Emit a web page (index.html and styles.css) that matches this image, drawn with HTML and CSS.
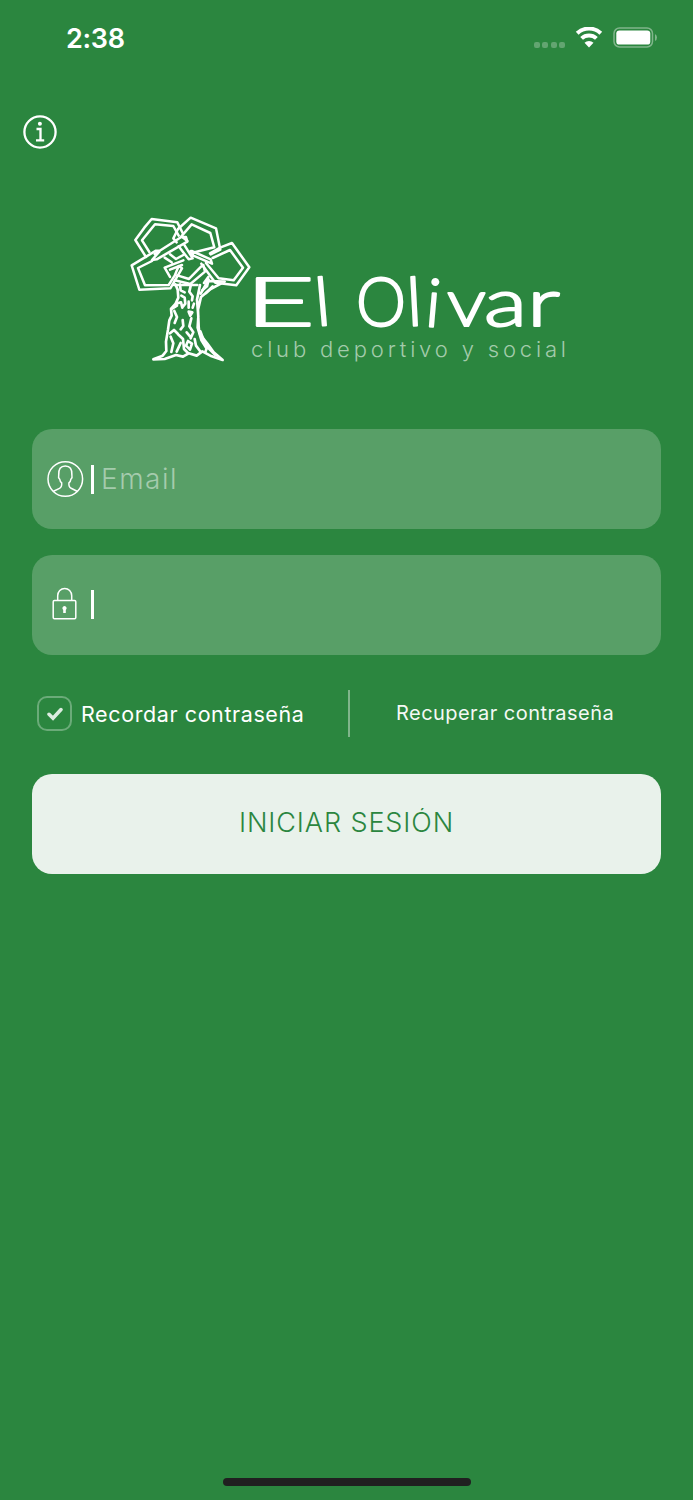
FILE: index.html
```html
<!DOCTYPE html>
<html lang="es">
    <head>
        <meta charset="utf-8" />
        <title>El Olivar</title>
        <link rel="stylesheet" href="styles.css">
    </head>
    <body>
        <header class="status">
            <span class="time">2:38</span>
            <div class="indicators">
                <div class="dots"><i></i><i></i><i></i><i></i></div>
                <svg class="wifi" width="28" height="22" viewBox="0 0 28 22">
                    <path class="wave" d="M2.2 6.3a17 17 0 0 1 23.6 0M6.6 11.4a10.8 10.8 0 0 1 14.8 0"/>
                    <path class="solid" d="M14 20.5l-4.5-4.7a6.5 6.5 0 0 1 9 0z"/>
                </svg>
                <svg class="battery" width="45" height="21" viewBox="0 0 45 21">
                    <rect class="case" x="1" y="1" width="38.5" height="19" rx="5.5"/>
                    <rect class="solid" x="3.3" y="3.4" width="34" height="14.2" rx="3.2"/>
                    <path class="tip" d="M42 7q2 1 2 3.5t-2 3.5z"/>
                </svg>
            </div>
        </header>

        <a class="info" href="#" aria-label="Info">
            <svg width="34" height="34" viewBox="0 0 34 34">
                <circle cx="17" cy="17" r="15.6"/>
                <path d="M13.5 14h4v11.2M13 25.4h8.2"/>
                <circle class="solid" cx="16.9" cy="8.7" r="2"/>
            </svg>
        </a>

        <svg class="logo" width="460" height="165" viewBox="0 0 460 165">
            <g class="tree" transform="scale(.3333)">
                <!-- leaves -->
                <path d="M188 84L172 52 95 42 73 68 46 105 78 156M176 92L160 63 105 58 66 106 88 141"/>
                <path d="M170 112L160 100 174 72 212 38 288 70 301 134 272 148M202 108L184 94 215 58 271 84 283 127 218 143"/>
                <path d="M116 137L108 137 35 181 58 254 151 250 186 190 176 183 164 212 146 240 75 241 54 189 96 168"/>
                <path d="M118 140L96 165 110 163 202 110 198 96 184 96 104 147"/>
                <path d="M134 158L155 172M150 148L168 162 190 150M190 166L134 188 150 216M186 180L150 194"/>
                <path d="M164 226L211 237 255 200 250 180M172 211L207 222 244 184"/>
                <path d="M176 124L206 163 218 160 192 118M212 138L220 152 276 176 272 163 215 138"/>
                <path d="M270 145L302 127 336 114 388 187 349 241 286 233 244 176M278 159L330 135 369 188 341 226 296 220 258 174"/>
                <!-- trunk -->
                <path class="bark" d="M166 238l7 16 2 24-8 18-14 16 2 20-7 14-4 28-6 36 1 28-11 14-28 11 34-1 34-12 21 5 17-10 24 7 17-13 24 13 37 13-27-23-19-26-24-30-2-22-2-50 9-38 29-24 42-22-50-2-22 38M240 240l-9 44 4 50-2 34 11 37 14 23"/>
                <path class="bark" d="M162 240h70M180 238l2 18 12 6M212 243l-4 17 10 14-2 12M184 272l10 6 2 18-8 10M206 290v18M206 320l5 12 6-10zM169 296l14-4 4 16M163 318l8 18-7 18M188 345l2 18-8 10M214 340l-6 24 12 18-8 18M150 385l12-10 12 12M152 395l8 20-6 26M174 388l15 14 3 30 12 12M200 382l10 12M182 414l-12 26M204 408l12 8-6 18-12-12zM224 402l4 20 12 16M241 379l12 32 9 14-6 16M260 424l26 26M247 256l14-12 5-20M258 264l20-20M252 234l13-18M155 312l16-10M222 296l-4 12"/>
            </g>
            <text class="brand" y="121"><tspan x="125" textLength="70" lengthAdjust="spacingAndGlyphs">E</tspan><tspan x="197" rotate="-5">l</tspan> <tspan x="236" textLength="50" lengthAdjust="spacingAndGlyphs">O</tspan><tspan x="288" rotate="-3">l</tspan><tspan x="304" rotate="5">i</tspan><tspan x="327" textLength="39" lengthAdjust="spacingAndGlyphs">v</tspan><tspan x="364" textLength="43" lengthAdjust="spacingAndGlyphs">a</tspan><tspan x="407" textLength="33" lengthAdjust="spacingAndGlyphs">r</tspan></text>
            <text class="tagline" x="131" y="152" textLength="315">club deportivo y social</text>
        </svg>

        <form class="login">
            <label class="field">
                <svg width="38" height="38" viewBox="0 0 38 38">
                    <circle cx="19.3" cy="19" r="17.3"/>
                    <path d="M7 31.5l6.5-3.2q2.5-1.2 2.2-5.4-1.7-1.2-2-3.7-1.7-1.5-1-4-.5-9.2 6.6-9.2t6.6 9.2q.7 2.5-1 4-.3 2.5-2 3.7-.3 4.2 2.2 5.4l6.5 3.2"/>
                </svg>
                <i class="caret"></i>
                <span class="placeholder">Email</span>
            </label>
            <label class="field">
                <svg width="38" height="38" viewBox="0 0 38 38">
                    <rect x="7.2" y="14.5" width="22.6" height="18.3" rx="1.2"/>
                    <path d="M11.7 14.3v-4.5a6.9 7.3 0 0 1 14 0v4.5"/>
                    <path class="solid" d="M18.5 20.1a2.2 2.2 0 0 1 1.3 3.9v3h-2.6v-3a2.2 2.2 0 0 1 1.3-3.9z"/>
                </svg>
                <i class="caret"></i>
            </label>
            <div class="options">
                <label class="remember">
                    <span class="check">
                        <svg width="16" height="14" viewBox="0 0 16 14"><path d="M2 7.3l4 4L14 2.5"/></svg>
                    </span>
                    <span class="remember-text">Recordar contraseña</span>
                </label>
                <a class="recover" href="#">Recuperar contraseña</a>
            </div>
            <button class="submit" type="button"><span>INICIAR SESIÓN</span></button>
        </form>

        <div class="home"></div>
    </body>
</html>
```

FILE: styles.css
```css
* {
    box-sizing: border-box;
}
body {
    display:        flex;
    flex-direction: column;
    height:         1500px;
    margin:         0;
    background:     #2b863f;
    color:          #fff;
    font-family:    Inter, "Liberation Sans", sans-serif;
}
svg {
    display: block;
    flex:    none;
    fill:    none;
    stroke:  #fff;
}
.solid {
    fill:   #fff;
    stroke: none;
}

/* status bar */
.status {
    display:         flex;
    justify-content: space-between;
    height:          76px;
    padding:         24px 35px 0 66px;
}
.time {
    font-size:      27px;
    font-weight:    600;
    line-height:    30px;
    letter-spacing: -.3px;
}
.indicators {
    display:     flex;
    align-items: flex-start;
}
.dots {
    display: flex;
    gap:     2.4px;
    margin:  18px 10px 0 0;
}
.dots i {
    width:         6px;
    height:        6px;
    border-radius: 2px;
    background:    #63a571;
}
.wifi {
    margin: 3px 10px 0 0;
}
.wave {
    stroke-width: 4;
}
.battery {
    margin-top: 3px;
}
.case {
    stroke:       #80b58b;
    stroke-width: 1.5;
}
.tip {
    fill:   #80b58b;
    stroke: none;
}

.info {
    align-self:   flex-start;
    margin:       39px 0 0 23px;
    stroke-width: 2.3;
}

/* logo */
.logo {
    margin: 56px 0 0 120px;
}
.tree {
    stroke-width:    7.5;
    stroke-linejoin: round;
    stroke-linecap:  round;
}
.bark {
    stroke-width: 8;
}
.brand {
    fill:            #fff;
    stroke:          #fff;
    stroke-width:    2;
    stroke-linejoin: round;
    font-family:     Lato, sans-serif;
    font-size:       67px;
    font-weight:     300;
}
.tagline {
    fill:        #a3cbab;
    stroke:      none;
    font-family: Inter, sans-serif;
    font-size:   22px;
    font-weight: 300;
}

/* form */
.login {
    padding: 59px 32px 0;
}
.field {
    display:       flex;
    align-items:   center;
    height:        100px;
    margin-bottom: 25.5px;
    padding-left:  14px;
    border-radius: 20px;
    background:    #589f67;
}
.field svg {
    stroke-width: 1.5;
}
.caret {
    width:       3px;
    height:      29px;
    margin-left: 7px;
    background:  #fff;
}
.placeholder {
    margin:         -1px 0 0 7px;
    color:          #a5cbad;
    font-size:      28px;
    font-weight:    300;
    letter-spacing: 1.5px;
}
.options {
    display:     flex;
    align-items: center;
    height:      47px;
    margin:      35px 0 37px;
}
.remember {
    display:      flex;
    align-items:  center;
    width:        318px;
    height:       47px;
    padding-left: 5px;
    border-right: 2px solid #80b58b;
}
.check {
    display:         flex;
    align-items:     center;
    justify-content: center;
    width:           35px;
    height:          35px;
    margin-top:      1px;
    border:          2px solid #6bab79;
    border-radius:   10px;
}
.check path {
    stroke:         #dcece0;
    stroke-width:   3.5;
    stroke-linecap: round;
}
.remember-text {
    margin:         1px 0 0 9px;
    font-size:      21.5px;
    letter-spacing: .6px;
    white-space:    nowrap;
}
.recover {
    margin-left:     46px;
    color:           #f4f9f5;
    font-size:       20px;
    letter-spacing:  .45px;
    text-decoration: none;
    white-space:     nowrap;
}
.submit {
    display:       block;
    width:         100%;
    height:        100px;
    padding:       0 0 3px;
    border:        0;
    border-radius: 20px;
    background:    #e9f2eb;
    color:         #2b863f;
    font-family:   inherit;
}
.submit span {
    display:        inline-block;
    overflow:       hidden;
    font-size:      27px;
    font-weight:    350;
    line-height:    29px;
    letter-spacing: .9px;
    vertical-align: top;
}

.home {
    width:         248px;
    height:        8px;
    margin:        auto auto 14px;
    border-radius: 4px;
    background:    #202020;
}
```
